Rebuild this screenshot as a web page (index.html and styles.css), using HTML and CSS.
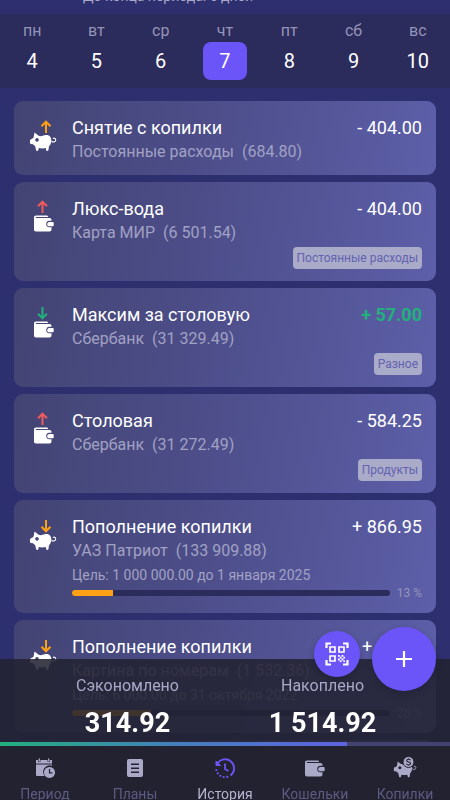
FILE: index.html
```html
<!DOCTYPE html>
<html lang="ru">
<head>
<meta charset="utf-8">
<meta name="viewport" content="width=device-width, initial-scale=1">
<title>История</title>
<link rel="stylesheet" href="styles.css">
</head>
<body>
<svg class="sprite" aria-hidden="true">
  <symbol id="up" viewBox="0 0 12 14"><path d="M6 13V2M1.5 6.3 6 1.7l4.500 4.600" fill="none" stroke="currentColor" stroke-width="2"/></symbol>
  <symbol id="down" viewBox="0 0 12 14"><path d="M6 1v11M1.500 7.700 6 12.300l4.500-4.600" fill="none" stroke="currentColor" stroke-width="2"/></symbol>
  <symbol id="pig" viewBox="0 0 28 21">
    <path fill="currentColor" fill-rule="evenodd" d="M5.500 0.500 9.300 3.600C11.500 4.600 13.500 4 15.500 3.300 20 2 22.500 5 22.300 8.500c-.1 2.800-1 4.700-2.300 5.800l-.6 4c-.3 1-1.900 1-2.200 0l-.5-2.300c-2 .6-5 .6-7 0l-.4 2.300c-.3 1-1.900 1-2.200 0l-.9-4L4 12.200l-2.200-.3C1.200 11.800 1 11.500 1 11V8.500c0-.7.400-1 1-1.200 1.200-.3 2-.9 2.600-1.800zM8 6.100a1.800 1.800 0 1 0 .01 0z"/>
    <path d="M22.500 9.200c2.200 1.600 4.400.4 4.200-1.500-.1-1.600-1.800-2.100-2.600-.9" fill="none" stroke="currentColor" stroke-width="1.100"/>
  </symbol>
  <symbol id="wallet" viewBox="0 0 20 17">
    <path fill="currentColor" fill-rule="evenodd" d="M2 .5h10.500c1 0 1.600.6 1.700 1.500H2.200c-.8 0-.8.9 0 .9h13.300c1.200 0 2 .8 2 1.900v1h-2.300c-4 0-4 6.500 0 6.500h2.300v2c0 1.400-.8 2.200-2 2.200H2c-1.200 0-2-.8-2-2V2.400C0 1.300.8.500 2 .5zM15.300 6.900h3.200c.8 0 1.200.4 1.200 1.100v2.200c0 .7-.4 1.100-1.200 1.100h-3.200c-2.800 0-2.800-4.400 0-4.400z"/>
  </symbol>
  <symbol id="out-wallet" viewBox="0 0 28 34"><use class="red" href="#up" x="7.500" y="0" width="12" height="14"/><use href="#wallet" x="5" y="15" width="20" height="17"/></symbol>
  <symbol id="in-wallet" viewBox="0 0 28 34"><use class="green" href="#down" x="7.500" y="0" width="12" height="14"/><use href="#wallet" x="5" y="15" width="20" height="17"/></symbol>
  <symbol id="out-pig" viewBox="0 0 28 34"><use class="orange" href="#up" x="11" y="1" width="12" height="14"/><use href="#pig" x="0" y="13" width="28" height="21"/></symbol>
  <symbol id="in-pig" viewBox="0 0 28 34"><use class="orange" href="#down" x="11" y="1" width="12" height="14"/><use href="#pig" x="0" y="13" width="28" height="21"/></symbol>
</svg>

<div class="app">
  <header class="period">До конца периода: 6 дней</header>
  <nav class="week" aria-label="Неделя">
    <button class="day" type="button"><span>пн</span><b>4</b></button>
    <button class="day" type="button"><span>вт</span><b>5</b></button>
    <button class="day" type="button"><span>ср</span><b>6</b></button>
    <button class="day current" type="button"><span>чт</span><b>7</b></button>
    <button class="day" type="button"><span>пт</span><b>8</b></button>
    <button class="day" type="button"><span>сб</span><b>9</b></button>
    <button class="day" type="button"><span>вс</span><b>10</b></button>
  </nav>

  <main class="feed">
    <article class="card">
      <svg class="kind" aria-hidden="true"><use href="#out-pig"/></svg>
      <div class="body">
        <div class="line"><h2>Снятие с копилки</h2><span class="sum">- 404.00</span></div>
        <p class="account">Постоянные расходы&nbsp; (684.80)</p>
      </div>
    </article>
    <article class="card">
      <svg class="kind" aria-hidden="true"><use href="#out-wallet"/></svg>
      <div class="body">
        <div class="line"><h2>Люкс-вода</h2><span class="sum">- 404.00</span></div>
        <p class="account">Карта МИР&nbsp; (6 501.54)</p>
        <span class="tag">Постоянные расходы</span>
      </div>
    </article>
    <article class="card">
      <svg class="kind" aria-hidden="true"><use href="#in-wallet"/></svg>
      <div class="body">
        <div class="line"><h2>Максим за столовую</h2><span class="sum income">+ 57.00</span></div>
        <p class="account">Сбербанк&nbsp; (31 329.49)</p>
        <span class="tag">Разное</span>
      </div>
    </article>
    <article class="card">
      <svg class="kind" aria-hidden="true"><use href="#out-wallet"/></svg>
      <div class="body">
        <div class="line"><h2>Столовая</h2><span class="sum">- 584.25</span></div>
        <p class="account">Сбербанк&nbsp; (31 272.49)</p>
        <span class="tag">Продукты</span>
      </div>
    </article>
    <article class="card">
      <svg class="kind" aria-hidden="true"><use href="#in-pig"/></svg>
      <div class="body">
        <div class="line"><h2>Пополнение копилки</h2><span class="sum">+ 866.95</span></div>
        <p class="account">УАЗ Патриот&nbsp; (133 909.88)</p>
        <p class="goal">Цель: 1 000 000.00 до 1 января 2025</p>
        <div class="progress"><div class="track"><div class="fill" style="width:13%"></div></div><span>13 %</span></div>
      </div>
    </article>
    <article class="card">
      <svg class="kind" aria-hidden="true"><use href="#in-pig"/></svg>
      <div class="body">
        <div class="line"><h2>Пополнение копилки</h2><span class="sum">+ 32.36</span></div>
        <p class="account">Картина по номерам&nbsp; (1 532.36)</p>
        <p class="goal">Цель: 6 000.00 до 31 октября 2022</p>
        <div class="progress"><div class="track"><div class="fill" style="width:25%"></div></div><span>25 %</span></div>
      </div>
    </article>
    <article class="card"></article>
  </main>

  <footer class="dock">
    <div class="actions">
      <button class="fab small" type="button" aria-label="Сканировать код">
        <svg width="24" height="24" viewBox="0 0 24 24" aria-hidden="true">
          <path d="M1.500 6V1.500H6M18 1.500h4.500V6M22.500 18v4.500H18M6 22.500H1.500V18" fill="none" stroke="#fff" stroke-width="2.200"/>
          <path d="M5 5h5v5H5zM14 5h5v5h-5zM5 14h5v5H5z" fill="none" stroke="#fff" stroke-width="1.700"/>
          <path d="M13 13h1.800v1.800H13zM16.600 13h1.800v1.800h-1.800zM14.800 14.800h1.800v1.800h-1.800zM18.400 14.800h1.600v1.800h-1.600zM13 16.600h1.800v1.800H13zM16.600 16.600h1.800v1.800h-1.800zM14.800 18.400h1.800V20h-1.800zM18.400 18.400H20V20h-1.600z" fill="#fff"/>
        </svg>
      </button>
      <button class="fab" type="button" aria-label="Добавить">
        <svg width="18" height="18" viewBox="0 0 18 18" aria-hidden="true"><path d="M9 1v16M1 9h16" stroke="#fff" stroke-width="2.200"/></svg>
      </button>
    </div>
    <section class="summary">
      <div><span>Сэкономлено</span><strong>314.92</strong></div>
      <div><span>Накоплено</span><strong>1 514.92</strong></div>
    </section>
    <div class="meter"><div class="level" style="width:77%"></div></div>
    <nav class="tabs" aria-label="Разделы">
      <a href="#period">
        <svg width="24" height="24" viewBox="0 0 24 24" aria-hidden="true" fill="currentColor">
          <path d="M3 4h2.200v2h2.200V4h7.200v2h2.200V4H19v3.500H3zM3 8.500h16v1.300a6.500 6.500 0 0 0-7.300 10.200H4.500c-1 0-1.500-.5-1.500-1.500z"/><path d="M5.700 2.500H7v3H5.700zM15 2.500h1.300v3H15z"/>
          <path fill-rule="evenodd" d="M16.500 11a5.500 5.500 0 1 0 .01 0zM15.900 13h1.200v3.300h2.300v1.200h-3.500z"/>
        </svg><span>Период</span></a>
      <a href="#plans">
        <svg width="24" height="24" viewBox="0 0 24 24" aria-hidden="true"><path fill="currentColor" fill-rule="evenodd" d="M6 3h12c1.200 0 2 .8 2 2v14c0 1.200-.8 2-2 2H6c-1.200 0-2-.8-2-2V5c0-1.200.8-2 2-2zM8 7.500V9h8V7.500zM8 11.500V13h8v-1.500zM8 15.500V17h8v-1.500z"/></svg><span>Планы</span></a>
      <a class="active" href="#history" aria-current="page">
        <svg width="24" height="24" viewBox="0 0 24 24" aria-hidden="true" fill="none" stroke="#6c55f8" stroke-width="1.800">
          <path d="M4.200 8A9 9 0 1 1 17.500 19.500M12 7.500V13l3.500 2"/><path d="M3 5v4.500h4.500z" fill="#6c55f8" stroke-width="1"/>
          <path d="M3.300 14A9 9 0 0 0 14.500 20.900" stroke-dasharray="0 3.600" stroke-linecap="round" stroke-width="2.200"/>
        </svg><span>История</span></a>
      <a href="#wallets">
        <svg width="24" height="24" viewBox="0 0 24 24" aria-hidden="true"><use href="#wallet" x="2" y="4" width="20" height="17"/></svg><span>Кошельки</span></a>
      <a href="#piggy">
        <svg width="24" height="24" viewBox="0 0 24 24" aria-hidden="true">
          <use href="#pig" x="0" y="5" width="24" height="18"/>
          <circle cx="15.500" cy="6" r="5.500" fill="currentColor" stroke="#232231" stroke-width="1"/>
          <path d="M17.600 4.300c-.8-1.600-4-1.300-4 .3 0 1.800 4 1.100 4 3 0 1.600-3.300 1.900-4.200.2M15.600 2.300v1M15.600 8.800v1" fill="none" stroke="#232231" stroke-width="1.100"/>
        </svg><span>Копилки</span></a>
    </nav>
  </footer>
</div>
</body>
</html>
```
FILE: styles.css
```css
* { box-sizing: border-box; }
body {
  margin: 0;
  background: #2e2f6e;
  color: #fff;
  font-family: Roboto, "Noto Sans", sans-serif;
}
h2, p { margin: 0; font-weight: 400; }
button { border: 0; padding: 0; background: none; color: inherit; font: inherit; }
.sprite { display: none; }
.red { color: #f15a5a; }
.green { color: #22b07d; }
.orange { color: #ffa114; }

.app { display: flex; flex-direction: column; height: 100vh; overflow: hidden; }

.period {
  display: flex;
  flex: none;
  align-items: flex-end;
  height: 14px;
  overflow: hidden;
  padding: 0 0 9px 83px;
  color: #aaa9c8;
  font-size: 14px;
  line-height: 18px;
}

.week { display: flex; flex: none; height: 74px; background: #2b2b5c; }
.day { display: flex; flex: 1; flex-direction: column; align-items: center; padding-top: 7px; }
.day span { color: #9594b8; font-size: 16px; line-height: 20px; }
.day b { width: 44px; margin-top: 1px; border-radius: 8px; font-size: 20px; font-weight: 400; line-height: 38px; }
.current b { background: #6c55f8; }

.feed { display: flex; flex-direction: column; gap: 7px; padding: 13px 14px; }
.card {
  display: flex;
  flex: none;
  gap: 15px;
  padding: 16px 14px 12px 15px;
  border-radius: 9px;
  background: linear-gradient(100deg, #434473, #4e4f8c 50%, #5d5fa9);
}
.kind { flex: none; width: 28px; height: 34px; margin-top: 2px; }
.body { display: flex; flex: 1; flex-direction: column; min-width: 0; }
.line { display: flex; justify-content: space-between; }
.line h2, .sum { font-size: 18px; line-height: 22px; }
.income { color: #22b07d; font-weight: 700; }
.account { margin-top: 1px; color: #a1a1c4; font-size: 16px; line-height: 23px; }
.tag {
  align-self: flex-end;
  margin-top: 3px;
  padding: 0 4px;
  border-radius: 4px;
  background: #aaaac9;
  color: #6263b0;
  font-size: 12px;
  line-height: 22px;
}
.goal { margin-top: 4px; color: #a1a1c4; font-size: 14px; line-height: 18px; }
.progress { display: flex; align-items: center; gap: 7px; height: 17px; color: #9393bd; font-size: 12px; }
.track { flex: 1; height: 6px; overflow: hidden; border-radius: 3px; background: #2b2b5c; }
.fill { height: 100%; background: #ffa114; }

.dock { position: fixed; right: 0; bottom: 0; left: 0; }
.summary { display: flex; padding: 17px 30px 2px; background: rgba(35, 34, 49, 0.87); }
.summary div { display: flex; flex: 1; flex-direction: column; align-items: center; gap: 11px; }
.summary span { color: #aaa9c8; font-size: 16px; line-height: 20px; }
.summary strong { font-size: 27px; font-weight: 700; line-height: 33px; }
.actions { position: absolute; top: -32px; right: 14px; display: flex; gap: 12px; }
.fab {
  display: flex;
  align-items: center;
  justify-content: center;
  width: 64px;
  height: 64px;
  border-radius: 50%;
  background: #6c55f8;
  box-shadow: 0 3px 6px rgba(20, 20, 40, 0.3);
}
.small { width: 46px; height: 46px; margin-top: 4px; }
.meter { height: 4px; background: #434370; }
.level { height: 100%; background: linear-gradient(90deg, #22b07d, #4480bb 50%, #5f63e0); }
.tabs { display: flex; height: 54px; overflow: hidden; background: #232231; }
.tabs a {
  display: flex;
  flex: 1;
  flex-direction: column;
  align-items: center;
  gap: 5px;
  padding-top: 10px;
  color: #aaa9c8;
  text-decoration: none;
}
.tabs svg { flex: none; }
.tabs span { color: #5c5b82; font-size: 14px; line-height: 18px; }
.tabs .active span { color: #b5b4d0; }
```
